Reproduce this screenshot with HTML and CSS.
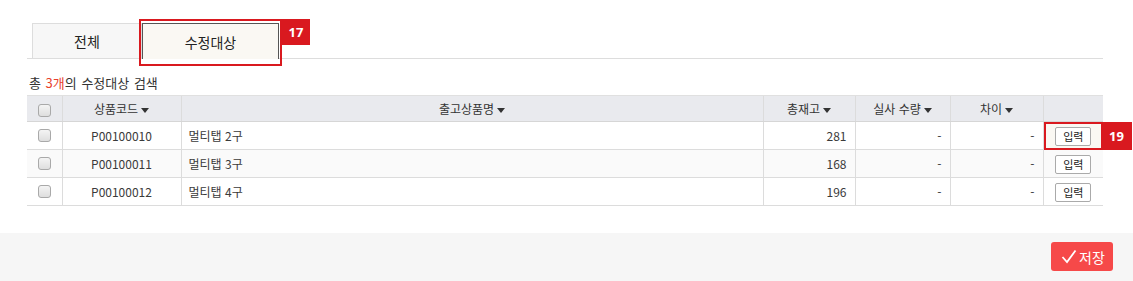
FILE: index.html
```html
<!DOCTYPE html>
<html lang="ko">
<head>
<meta charset="utf-8">
<link rel="stylesheet" href="styles.css">
</head>
<body>
<div class="page">
  <div class="tabs">
    <div class="tab">전체</div>
    <div class="tab active">수정대상
      <span class="hl hl-tab"></span>
      <span class="badge badge-tab">17</span>
    </div>
  </div>
  <div class="summary">총 <span class="cnt">3개</span>의 수정대상 검색</div>
  <table class="grid">
    <colgroup>
      <col class="c-chk"><col class="c-code"><col class="c-name"><col class="c-stock"><col class="c-real"><col class="c-diff"><col class="c-btn">
    </colgroup>
    <thead>
      <tr>
        <th><span class="chk"></span></th>
        <th>상품코드<span class="caret"></span></th>
        <th>출고상품명<span class="caret"></span></th>
        <th>총재고<span class="caret"></span></th>
        <th>실사 수량<span class="caret"></span></th>
        <th>차이<span class="caret"></span></th>
        <th></th>
      </tr>
    </thead>
    <tbody>
      <tr>
        <td class="ctr"><span class="chk"></span></td>
        <td class="ctr">P00100010</td>
        <td>멀티탭 2구</td>
        <td class="num">281</td>
        <td class="num">-</td>
        <td class="num">-</td>
        <td class="ctr btncell marked"><button class="inbtn">입력</button><span class="hl hl-cell"></span><span class="badge badge-cell">19</span></td>
      </tr>
      <tr class="alt">
        <td class="ctr"><span class="chk"></span></td>
        <td class="ctr">P00100011</td>
        <td>멀티탭 3구</td>
        <td class="num">168</td>
        <td class="num">-</td>
        <td class="num">-</td>
        <td class="ctr btncell"><button class="inbtn">입력</button></td>
      </tr>
      <tr>
        <td class="ctr"><span class="chk"></span></td>
        <td class="ctr">P00100012</td>
        <td>멀티탭 4구</td>
        <td class="num">196</td>
        <td class="num">-</td>
        <td class="num">-</td>
        <td class="ctr btncell"><button class="inbtn">입력</button></td>
      </tr>
    </tbody>
  </table>
</div>
<div class="footer">
  <button class="save"><svg class="chkicon" width="16" height="15" viewBox="0 0 16 15"><path d="M1.5 8 L6 13 L14.5 1.5" fill="none" stroke="#fff" stroke-width="1.8"/></svg>저장</button>
</div>
</body>
</html>
```

FILE: styles.css
```css
* { box-sizing: border-box; }
html, body { margin: 0; padding: 0; background: #fff; }
body {
  font-family: "Noto Sans CJK KR", "Noto Sans", "Liberation Sans", sans-serif;
  font-size: 12px;
  color: #333;
  width: 1133px;
  height: 281px;
  overflow: hidden;
}
.page { padding: 23px 30px 0 27px; height: 233px; }
.tabs {
  display: flex;
  padding-left: 5px;
  border-bottom: 1px solid #dddddd;
  height: 36px;
}
.tab {
  position: relative;
  width: 110px;
  height: 35px;
  border: 1px solid #dddddd;
  border-bottom: none;
  background: #f7f7f7;
  font-size: 14px;
  color: #222;
  display: flex;
  align-items: center;
  justify-content: center;
}
.tab.active {
  width: 137px;
  height: 36px;
  border: 1px solid #555;
  border-bottom: none;
  background: #faf8f3;
}
.hl {
  position: absolute;
  border: 2px solid #d9191f;
  pointer-events: none;
}
.hl-tab { left: -4px; top: -5px; width: 143px; height: 47px; }
.badge {
  position: absolute;
  background: #d9191f;
  color: #fff;
  font-family: "Noto Sans", "Liberation Sans", sans-serif;
  font-weight: bold;
  font-size: 13px;
  display: flex;
  align-items: center;
  justify-content: center;
}
.badge-tab { left: 139px; top: -5px; width: 28px; height: 26px; }
.summary {
  height: 36px;
  line-height: 1;
  padding: 17px 0 0 2px;
  font-size: 13px;
  word-spacing: 1px;
  color: #333;
}
.cnt { color: #e8412c; }
.grid {
  width: 1076px;
  border-collapse: collapse;
  table-layout: fixed;
}
.c-chk { width: 35px; }
.c-code { width: 119px; }
.c-name { width: 582px; }
.c-stock { width: 92px; }
.c-real { width: 95px; }
.c-diff { width: 93px; }
.c-btn { width: 60px; }
.grid th {
  height: 26px;
  background: #e9eaee;
  font-weight: normal;
  font-size: 12px;
  color: #333;
  border-left: 1px solid #dcdcdc;
  border-top: 1px solid #e0e0e0;
  border-bottom: 1px solid #d6d6d6;
  padding: 0;
  text-align: center;
}
.grid th:first-child, .grid td:first-child { border-left: none; }
.caret {
  display: inline-block;
  width: 0; height: 0;
  border-left: 4px solid transparent;
  border-right: 4px solid transparent;
  border-top: 5px solid #333;
  margin-left: 3px;
  vertical-align: 1px;
}
.grid td {
  height: 28px;
  border-left: 1px solid #dcdcdc;
  border-bottom: 1px solid #dcdcdc;
  padding: 0 7px;
  font-size: 12px;
  color: #3a3a3a;
  white-space: nowrap;
}
.grid tr.alt td { background: #fafafa; }
.grid td.ctr { text-align: center; padding: 0; }
.grid td.num { text-align: right; padding-right: 8px; }
.chk {
  display: inline-block;
  width: 13px; height: 13px;
  border: 1px solid #a9a9a9;
  border-radius: 3px;
  background: linear-gradient(#f4f4f4, #dedede);
  vertical-align: middle;
}
.grid td .chk { margin-top: -4px; }
.btncell { position: relative; }
.marked { background: #faf8f3; }
.inbtn {
  font-family: inherit;
  font-size: 11px;
  color: #222;
  width: 36px;
  height: 19px;
  padding: 0;
  border: 1px solid #aaa;
  border-radius: 2px;
  background: #fff;
  vertical-align: middle;
}
.hl-cell { left: 0; top: 0; width: 59px; height: 28px; }
.badge-cell { left: 58px; top: 0; width: 30px; height: 28px; font-size: 13px; }
.footer {
  height: 48px;
  background: #f6f6f6;
  display: flex;
  justify-content: flex-end;
  align-items: flex-start;
  padding: 9px 20px 0 0;
}
.save {
  height: 29px;
  width: 62px;
  background: #f64949;
  color: #fff;
  border: none;
  border-radius: 3px;
  font-family: inherit;
  font-size: 14px;
  display: flex;
  align-items: center;
  justify-content: center;
  gap: 2px;
  padding: 0 0 0 2px;
}
.chkicon { display: block; }
```
